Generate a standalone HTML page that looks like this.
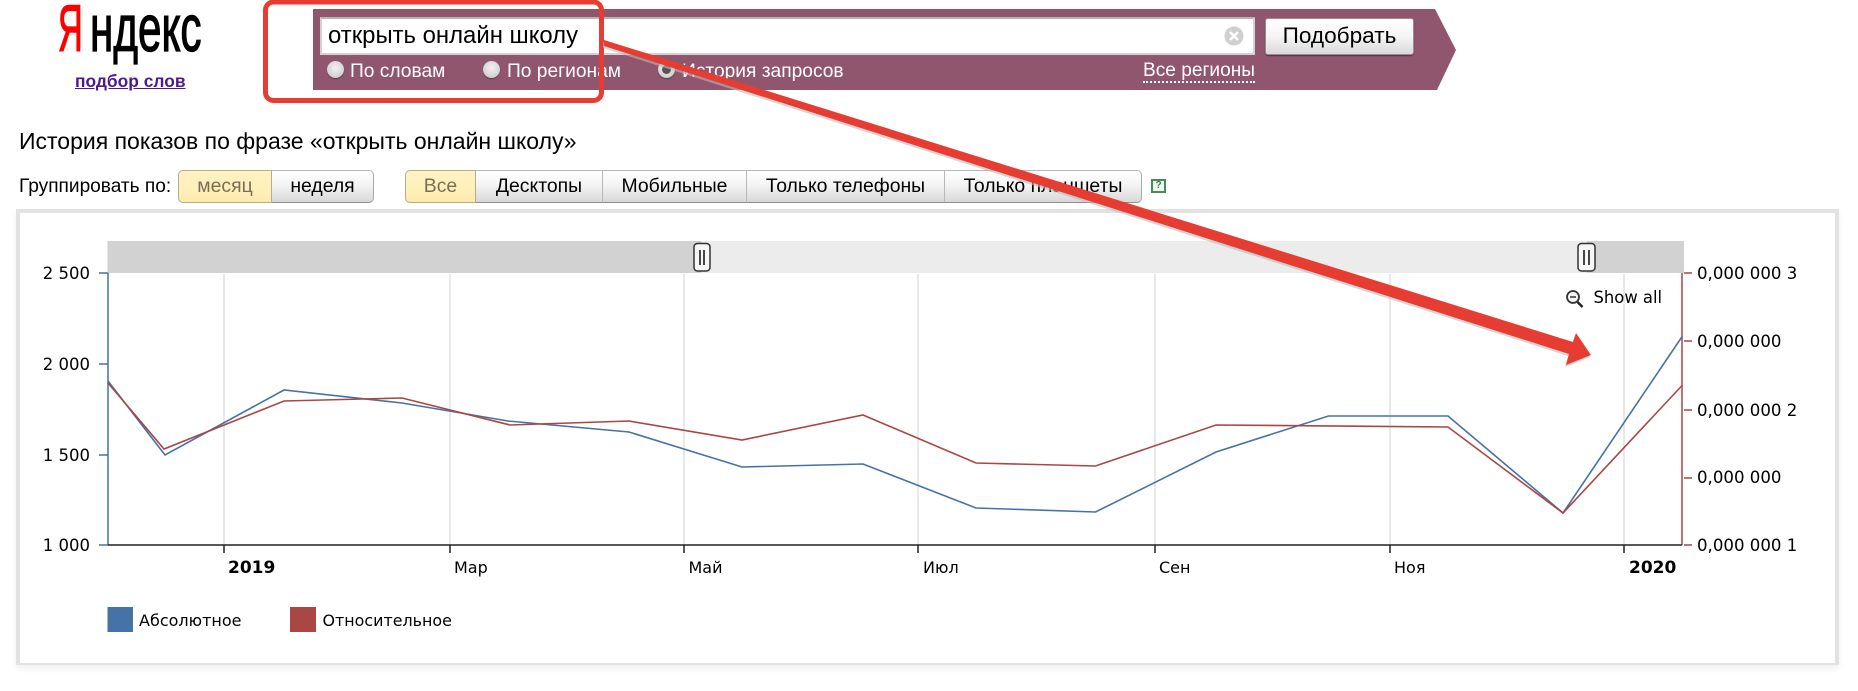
<!DOCTYPE html>
<html lang="ru"><head><meta charset="utf-8"><title>Яндекс подбор слов</title>
<style>
html,body{margin:0;padding:0;background:#fff}
body{width:1858px;height:691px;position:relative;overflow:hidden;font-family:"Liberation Sans",Arial,sans-serif;color:#000}
.a{position:absolute;white-space:nowrap}
.logo{font-size:66px;line-height:66px;transform-origin:0 0}
.opt{color:#fff;font-size:19.2px;line-height:22px}
.radio{position:absolute;width:17px;height:17px;border-radius:50%;background:radial-gradient(circle at 50% 40%,#f2f2f2,#cfcfcf 75%,#aaa);box-shadow:0 1px 1px rgba(0,0,0,.35)}
.seg{position:absolute;top:170px;height:33px;box-sizing:border-box;border:1px solid #b8b8b8;border-bottom-color:#8f8f8f;border-left:none;background:linear-gradient(#fff 0,#f4f4f4 45%,#d8d8d8 100%);font-size:19.4px;line-height:30px;text-align:center}
.on{background:linear-gradient(#fff2c4,#ffefb8 70%,#fdeaa9);color:#7a6f55;border-color:#b5ad8c;border-left:1px solid #b5ad8c}
</style></head><body>

<div class="a logo" style="left:58px;top:-5px;color:#f00;transform:scaleX(.52);-webkit-text-stroke:1.4px #f00">Я</div>
<div class="a logo" style="left:90px;top:-5px;transform:scaleX(.64);-webkit-text-stroke:1.3px #000">ндекс</div>
<a class="a" style="left:75px;top:71px;font-size:17.4px;line-height:20px;font-weight:bold;color:#4c1a8c;text-decoration:underline">подбор слов</a>

<svg class="a" style="left:0;top:0" width="1858" height="100"><polygon points="313,9 1435,9 1456,50 1437,90 313,90" fill="#8f566e"/></svg>

<div class="a" style="left:320px;top:17px;width:935px;height:38px;box-sizing:border-box;background:#fff;border:2px solid #d5d0d2;border-top-color:#b9b2b5"></div>
<div class="a" style="left:328px;top:22px;font-size:23.9px;line-height:28px">открыть онлайн школу</div>
<svg class="a" style="left:1224px;top:26px" width="20" height="20" viewBox="0 0 20 20"><circle cx="10" cy="10" r="9.5" fill="#cfcfcf"/><path d="M6 6L14 14M14 6L6 14" stroke="#fff" stroke-width="2.6"/></svg>
<div class="a" style="left:1265px;top:18px;width:149px;height:37px;box-sizing:border-box;border:1px solid #a08a94;border-radius:3px;background:linear-gradient(#fff,#f5f5f5 50%,#d9d9d9);box-shadow:0 1px 1px rgba(0,0,0,.4);font-size:22.6px;line-height:33px;text-align:center">Подобрать</div>

<div class="radio" style="left:327px;top:61px"></div>
<div class="a opt" style="left:350px;top:61px">По словам</div>
<div class="radio" style="left:483px;top:61px"></div>
<div class="a opt" style="left:507px;top:61px">По регионам</div>
<div class="radio" style="left:658px;top:61px"><div style="position:absolute;left:4px;top:4px;width:9px;height:9px;border-radius:50%;background:#555"></div></div>
<div class="a opt" style="left:682px;top:61px">История запросов</div>
<div class="a opt" style="left:1143px;top:60px;font-size:19.1px;border-bottom:2px dotted #fff;height:21px">Все регионы</div>

<div class="a" style="left:19px;top:128px;font-size:23px;line-height:26px">История показов по фразе «открыть онлайн школу»</div>

<div class="a" style="left:19px;top:176px;font-size:19.1px;line-height:22px">Группировать по:</div>
<div class="seg on" style="left:178px;width:94px;border-radius:5px 0 0 5px">месяц</div>
<div class="seg" style="left:272px;width:102px;border-radius:0 5px 5px 0;border-right:1px solid #aaa">неделя</div>
<div class="seg on" style="left:405px;width:71px;border-radius:5px 0 0 5px">Все</div>
<div class="seg" style="left:476px;width:127px">Десктопы</div>
<div class="seg" style="left:603px;width:144px">Мобильные</div>
<div class="seg" style="left:747px;width:198px">Только телефоны</div>
<div class="seg" style="left:945px;width:197px;border-radius:0 5px 5px 0;border-right:1px solid #aaa">Только планшеты</div>
<div class="a" style="left:1151px;top:179px;width:15px;height:14px;box-sizing:border-box;border:2px solid #4a8a5a;background:#eef6ee;font:bold 10px/10px 'Liberation Sans',sans-serif;color:#3a7a4a;text-align:center">?</div>

<div class="a" style="left:16px;top:209px;width:1823px;height:456px;box-sizing:border-box;border:4px solid #e2e2e2;border-bottom-width:2px;background:#fff;box-shadow:0 4px 6px rgba(0,0,0,.06)"></div>

<svg class="a" style="left:0;top:0" width="1858" height="691" viewBox="0 0 1858 691" font-family="'DejaVu Sans',sans-serif" font-size="16">
  <rect x="107.5" y="241" width="1576.5" height="32" fill="#ececec"/>
  <rect x="107.5" y="241" width="594" height="32" fill="#d2d2d2"/>
  <rect x="1587" y="241" width="97" height="32" fill="#d2d2d2"/>
  <g stroke="#d8d8d8" stroke-width="1.2" fill="none">
    <path d="M224 274V545M450 274V545M684 274V545M918 274V545M1155 274V545M1390 274V545M1624 274V545"/>
  </g>
  <g fill="#f6f6f6" stroke="#333" stroke-width="1.5">
    <rect x="694" y="243.500" width="16" height="27.500" rx="3.500"/>
    <rect x="1578" y="243.500" width="17" height="27.500" rx="3.500"/>
  </g>
  <path d="M700 250V265M704 250V265M1584 250V265M1589 250V265" stroke="#333" stroke-width="1.800"/>

  <path d="M108 273V545M99 273H108M99 364H108M99 455H108M99 545H108" stroke="#4572a7" stroke-width="1.500" fill="none"/>
  <path d="M1682 273V545M1684 273H1692M1684 341H1692M1684 410H1692M1684 478H1692M1684 545H1692" stroke="#aa4643" stroke-width="1.500" fill="none"/>
  <path d="M108 545H1682M224 545V553M450 545V553M684 545V553M918 545V553M1155 545V553M1390 545V553M1624 545V553" stroke="#222" stroke-width="1.500" fill="none"/>

  <polyline fill="none" stroke="#4572a7" stroke-width="1.600" points="108,381 165,455 284,390 402,403 508,421 629,432 742,467 863,464 976,508 1095.500,512 1216,452 1328.500,416 1448,416 1563,513 1682.500,336"/>
  <polyline fill="none" stroke="#aa4643" stroke-width="1.600" points="108,383 164,449 284,401 402,398 510,425 629,421 742,440 863,415 976,463 1095.500,466 1216,425 1448,427 1563,513 1682.500,385"/>

  <g text-anchor="end" fill="#000" font-size="16.5">
    <text x="90" y="279">2 500</text><text x="90" y="370">2 000</text><text x="90" y="461">1 500</text><text x="90" y="551">1 000</text>
  </g>
  <g fill="#000">
    <g font-size="16.6"><text x="1697" y="279">0,000 000 3</text><text x="1697" y="347">0,000 000</text><text x="1697" y="416">0,000 000 2</text><text x="1697" y="483">0,000 000</text><text x="1697" y="551">0,000 000 1</text></g>
    <text x="228" y="573" font-weight="bold" font-size="17">2019</text>
    <text x="454" y="573">Мар</text><text x="688.500" y="573">Май</text><text x="923" y="573">Июл</text><text x="1159" y="573">Сен</text><text x="1394" y="573">Ноя</text>
    <text x="1629" y="573" font-weight="bold" font-size="17">2020</text>
    <text x="1593.500" y="303" font-size="16.4">Show all</text>
    <text x="139" y="626">Абсолютное</text><text x="322.500" y="626" font-size="15.9">Относительное</text>
  </g>
  <circle cx="1573" cy="297" r="6" fill="#f4f4f4" stroke="#333" stroke-width="1.800"/>
  <path d="M1570 297H1576" stroke="#333" stroke-width="1.500"/>
  <path d="M1577.500 302L1582.500 307" stroke="#222" stroke-width="2.500"/>
  <rect x="107.500" y="607" width="25.500" height="25" fill="#4572a7"/>
  <rect x="290" y="607" width="26" height="25" fill="#aa4643"/>

  <rect x="265.500" y="2" width="336" height="98.500" rx="8" fill="none" stroke="#e73c31" stroke-width="5"/>
  <polygon points="604,40 1573,342 1576,333 1591,355 1566,365 1569,354 604,46" fill="#b9b9b9" transform="translate(-1,2)" opacity=".6"/>
  <polygon points="604,40 1573,342 1576,333 1591,355 1566,365 1569,354 604,46" fill="#e73c31"/>
</svg>
</body></html>
